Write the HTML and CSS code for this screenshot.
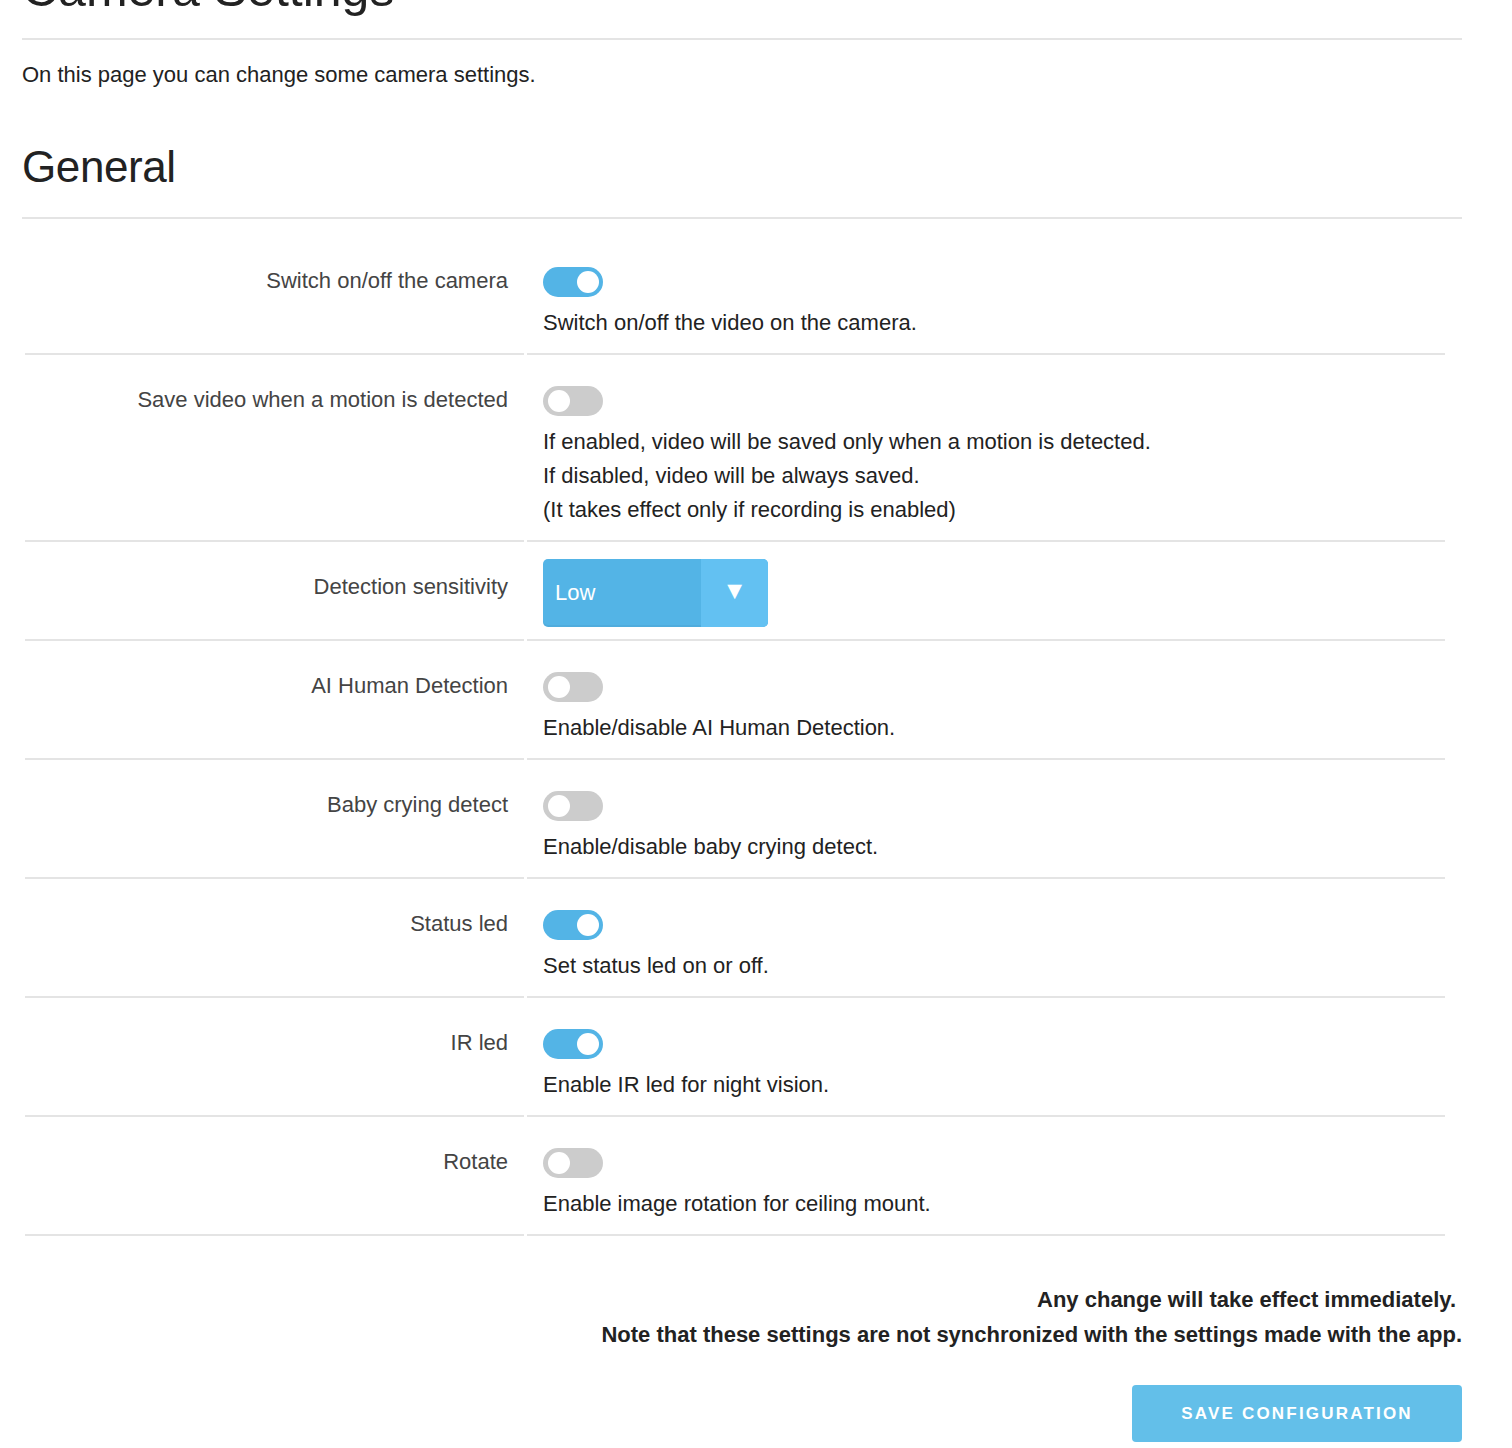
FILE: index.html
```html
<!DOCTYPE html>
<html lang="en">
<head>
<meta charset="utf-8">
<title>Camera Settings</title>
<link rel="stylesheet" href="styles.css">
</head>
<body>
<div class="page">
  <h1 class="title">Camera Settings</h1>
  <p class="intro">On this page you can change some camera settings.</p>
  <h2 class="section">General</h2>

  <div class="rows">
    <div class="label">Switch on/off the camera</div>
    <div class="field">
      <span class="toggle on"></span>
      <div class="desc">Switch on/off the video on the camera.</div>
    </div>

    <div class="label">Save video when a motion is detected</div>
    <div class="field">
      <span class="toggle"></span>
      <div class="desc">If enabled, video will be saved only when a motion is detected.<br>If disabled, video will be always saved.<br>(It takes effect only if recording is enabled)</div>
    </div>

    <div class="label">Detection sensitivity</div>
    <div class="field">
      <div class="select"><span class="select-value">Low</span><span class="select-arrow">&#9660;</span></div>
    </div>

    <div class="label">AI Human Detection</div>
    <div class="field">
      <span class="toggle"></span>
      <div class="desc">Enable/disable AI Human Detection.</div>
    </div>

    <div class="label">Baby crying detect</div>
    <div class="field">
      <span class="toggle"></span>
      <div class="desc">Enable/disable baby crying detect.</div>
    </div>

    <div class="label">Status led</div>
    <div class="field">
      <span class="toggle on"></span>
      <div class="desc">Set status led on or off.</div>
    </div>

    <div class="label">IR led</div>
    <div class="field">
      <span class="toggle on"></span>
      <div class="desc">Enable IR led for night vision.</div>
    </div>

    <div class="label">Rotate</div>
    <div class="field">
      <span class="toggle"></span>
      <div class="desc">Enable image rotation for ceiling mount.</div>
    </div>
  </div>

  <div class="notes">
    <span class="note note-first">Any change will take effect immediately.</span>
    <span class="note">Note that these settings are not synchronized with the settings made with the app.</span>
  </div>

  <div class="actions">
    <button class="save">SAVE CONFIGURATION</button>
  </div>
</div>
</body>
</html>
```

FILE: styles.css
```css
html, body {
  margin: 0;
  padding: 0;
  background: #fff;
}

body {
  font-family: "Liberation Sans", Arial, Helvetica, sans-serif;
  font-size: 22px;
  color: #222;
  overflow: hidden;
}

.page {
  width: 1440px;
  padding: 0 22px;
}

.title {
  margin: -36px 0 0;
  font-size: 50px;
  line-height: 50px;
  font-weight: normal;
  color: #222;
  padding-bottom: 24px;
  border-bottom: 2px solid #e4e4e4;
}

.intro {
  margin: 18px 0 0;
  line-height: 34px;
}

.section {
  margin: 49px 0 0;
  font-size: 44px;
  line-height: 48px;
  font-weight: normal;
  letter-spacing: -0.4px;
  color: #222;
  padding: 2px 0 26px;
  border-bottom: 2px solid #e4e4e4;
}

.rows {
  display: grid;
  grid-template-columns: 499px 918px;
  column-gap: 3px;
  margin: 17px 0 0 3px;
}

.label {
  text-align: right;
  padding: 28px 16px 0 0;
  line-height: 34px;
  color: #444;
  border-bottom: 2px solid #e4e4e4;
}

.field {
  padding: 31px 0 13px 16px;
  border-bottom: 2px solid #e4e4e4;
}

.toggle {
  display: block;
  position: relative;
  width: 60px;
  height: 30px;
  border-radius: 15px;
  background: #cccccc;
}

.toggle::after {
  content: "";
  position: absolute;
  top: 4px;
  left: 5px;
  width: 22px;
  height: 22px;
  border-radius: 50%;
  background: #fff;
}

.toggle.on {
  background: #53b4e6;
}

.toggle.on::after {
  left: auto;
  right: 4px;
}

.desc {
  margin-top: 9px;
  line-height: 34px;
  color: #222;
}

.select {
  display: flex;
  width: 225px;
  height: 68px;
  margin: -14px 0 -1px;
  border-radius: 5px;
  overflow: hidden;
  background: #53b4e6;
  color: #fff;
  box-shadow: inset 0 -2px 0 rgba(0, 0, 0, 0.04);
}

.select-value {
  flex: 1;
  display: flex;
  align-items: center;
  padding: 0 0 0 12px;
  font-size: 22px;
}

.select-arrow {
  width: 67px;
  display: flex;
  align-items: center;
  justify-content: center;
  background: #63c1f2;
  font-size: 25px;
  padding-bottom: 6px;
  box-sizing: border-box;
}

.notes {
  margin-top: 46px;
  display: flex;
  flex-direction: column;
  align-items: flex-end;
  font-weight: bold;
  font-size: 22px;
  line-height: 35px;
  color: #222;
}

.note-first {
  padding-right: 6px;
}

.actions {
  display: flex;
  justify-content: flex-end;
  margin-top: 33px;
}

.save {
  width: 330px;
  height: 57px;
  border: 0;
  border-radius: 4px;
  background: #63bfe9;
  color: #fff;
  font-family: "Liberation Sans", Arial, Helvetica, sans-serif;
  font-weight: bold;
  font-size: 17px;
  letter-spacing: 2.2px;
  padding: 0;
}
```
